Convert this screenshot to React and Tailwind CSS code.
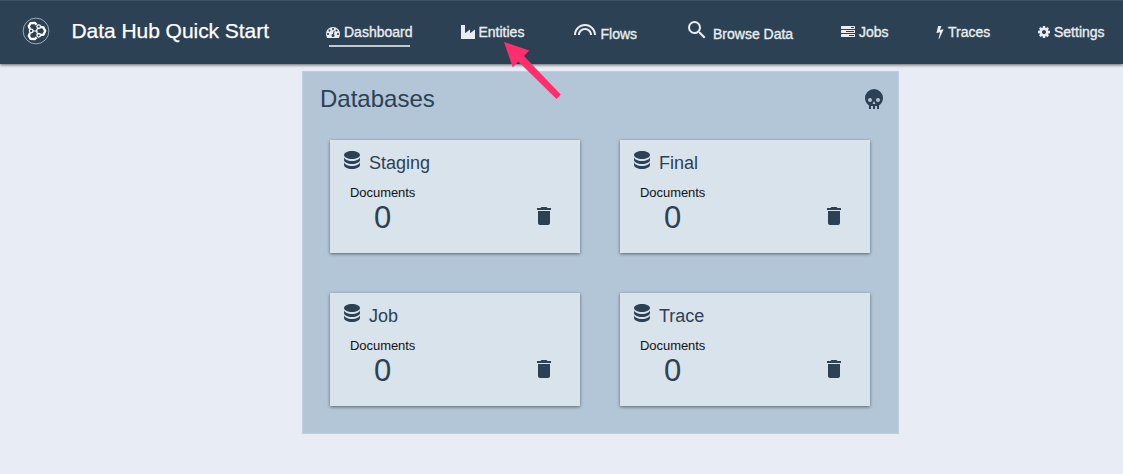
import React from "react";
import { MdLooks, MdSearch, MdDelete } from "react-icons/md";

const TACHOMETER =
  "M384 1152q0-53-37.5-90.5t-90.5-37.5-90.5 37.5-37.5 90.5 37.5 90.5 90.5 37.5 90.5-37.5 37.5-90.5zm192-448q0-53-37.5-90.5t-90.5-37.5-90.5 37.5-37.5 90.5 37.5 90.5 90.5 37.5 90.5-37.5 37.5-90.5zm428 481l101-382q6-26-7.5-48.5t-38.5-29.5-48 6.5-30 39.5l-101 382q-60 5-107 43.5t-63 98.5q-20 77 20 146t117 89 146-20 89-117q16-60-6-117t-72-91zm660-33q0-53-37.5-90.5t-90.5-37.5-90.5 37.5-37.5 90.5 37.5 90.5 90.5 37.5 90.5-37.5 37.5-90.5zm-640-640q0-53-37.5-90.5t-90.5-37.5-90.5 37.5-37.5 90.5 37.5 90.5 90.5 37.5 90.5-37.5 37.5-90.5zm448 192q0-53-37.5-90.5t-90.5-37.5-90.5 37.5-37.5 90.5 37.5 90.5 90.5 37.5 90.5-37.5 37.5-90.5zm320 448q0 261-141 483-19 29-54 29h-1402q-35 0-54-29-141-221-141-483 0-182 71-348t191-286 286-191 348-71 348 71 286 191 191 286 71 348z";
const TASKS =
  "M1024 1408h640v-128h-640v128zm-384-512h1024v-128h-1024v128zm640-512h384v-128h-384v128zm512 832v256q0 26-19 45t-45 19h-1664q-26 0-45-19t-19-45v-256q0-26 19-45t45-19h1664q26 0 45 19t19 45zm0-512v256q0 26-19 45t-45 19h-1664q-26 0-45-19t-19-45v-256q0-26 19-45t45-19h1664q26 0 45 19t19 45zm0-512v256q0 26-19 45t-45 19h-1664q-26 0-45-19t-19-45v-256q0-26 19-45t45-19h1664q26 0 45 19t19 45z";
const BOLT =
  "M1333 566q18 20 7 44l-540 1157q-13 25-42 25-4 0-14-2-17-5-25.5-19t-4.5-30l197-808-406 101q-4 1-12 1-18 0-31-11-18-15-13-39l201-825q4-14 16-23t28-9h328q19 0 32 12.5t13 29.5q0 8-5 18l-171 463 396-98q8-2 12-2 19 0 34 15z";
const COG =
  "M1152 896q0-106-75-181t-181-75-181 75-75 181 75 181 181 75 181-75 75-181zm512-109v222q0 12-8 23t-20 13l-185 28q-19 54-39 91 35 50 107 138 10 12 10 25t-9 23q-27 37-99 108t-94 71q-12 0-26-9l-138-108q-44 23-91 38-16 136-29 186-7 28-36 28h-222q-14 0-24.5-8.5t-11.5-21.5l-28-184q-49-16-90-37l-141 107q-10 9-25 9-14 0-25-11-126-114-165-168-7-10-7-23 0-12 8-23 15-21 51-66.5t54-70.5q-27-50-41-99l-183-27q-13-2-21-12.5t-8-23.5v-222q0-12 8-23t19-13l186-28q14-46 39-92-40-57-107-138-10-12-10-24 0-10 9-23 26-36 98.5-107.5t94.5-71.5q13 0 26 10l138 107q44-23 91-38 16-136 29-186 7-28 36-28h222q14 0 24.5 8.5t11.5 21.5l28 184q49 16 90 37l142-107q9-9 24-9 13 0 25 10 129 119 165 170 7 8 7 22 0 12-8 23-15 21-51 66.5t-54 70.5q26 50 41 98l183 28q13 2 21 12.5t8 23.5z";
const SKULL =
  "M12,2A9,9 0 0,0 3,11C3,14.03 4.53,16.82 7,18.47V22H9V19H11V22H13V19H15V22H17V18.46C19.47,16.81 21,14 21,11A9,9 0 0,0 12,2M8,11A2,2 0 0,1 10,13A2,2 0 0,1 8,15A2,2 0 0,1 6,13A2,2 0 0,1 8,11M16,11A2,2 0 0,1 18,13A2,2 0 0,1 16,15A2,2 0 0,1 14,13A2,2 0 0,1 16,11M12,14L13.5,17H10.5L12,14Z";
const DATABASE =
  "M12,3C7.58,3 4,4.79 4,7C4,9.21 7.58,11 12,11C16.42,11 20,9.21 20,7C20,4.79 16.42,3 12,3M4,9V12C4,14.21 7.58,16 12,16C16.42,16 20,14.21 20,12V9C20,11.21 16.42,13 12,13C7.58,13 4,11.21 4,9M4,14V17C4,19.21 7.58,21 12,21C16.42,21 20,19.21 20,17V14C20,16.21 16.42,18 12,18C7.58,18 4,16.21 4,14Z";

function Glyph({ d, box = 24, className }) {
  return (
    <svg viewBox={`0 0 ${box} ${box}`} className={`block shrink-0 ${className}`} fill="currentColor">
      <path d={d} />
    </svg>
  );
}

function Logo() {
  return (
    <svg viewBox="0 0 28 28" className="block h-7 w-7 shrink-0" fill="none" stroke="#fff">
      <circle cx="14" cy="14" r="12.9" strokeWidth="0.8" stroke="#b9c5ce" />
      <path d="M14.6 7.6L12.8 6L8.6 6.2L6.8 9.2L8 12" strokeWidth="2.3" />
      <path d="M8 16L6.8 18.8L8.6 21.8L12.8 22L14.6 20.4" strokeWidth="2.3" />
      <path d="M18.6 10L21.4 10.4L23.2 14L21.4 17.6L18.6 18" strokeWidth="2.3" />
      <path d="M10.8 14H16M13.8 14L16.4 10.6M13.8 14L16.4 17.4" strokeWidth="1.1" />
      <circle cx="9.2" cy="14" r="1.8" strokeWidth="1.3" />
      <circle cx="16.7" cy="9.7" r="1.8" strokeWidth="1.3" />
      <circle cx="16.7" cy="18.3" r="1.8" strokeWidth="1.3" />
    </svg>
  );
}

function NavItem({ icon, label, className = "" }) {
  return (
    <a className={`flex shrink-0 items-center text-sm leading-5 whitespace-nowrap text-[#e9edf0] [-webkit-text-stroke:0.35px_#e9edf0] ${className}`}>
      {icon}
      <span>{label}</span>
    </a>
  );
}

function Header() {
  return (
    <header className="relative z-10 flex h-[63.5px] items-start border-t border-[#3b5364] bg-[#2c4154] shadow-[0_1px_3px_rgba(0,0,0,0.6)]">
      <div className="flex w-[326px] shrink-0 items-center pt-4 pl-[22px]">
        <Logo />
        <h1 className="ml-[21.5px] text-[21px] leading-7 tracking-[-0.05px] whitespace-nowrap text-white [-webkit-text-stroke:0.25px_#fff]">
          Data Hub Quick Start
        </h1>
      </div>
      <nav className="flex items-start pt-[21px]">
        <div className="w-[134px] shrink-0">
          <NavItem label="Dashboard" icon={<Glyph d={TACHOMETER} box={1792} className="mr-1 h-3.5 w-3.5" />} />
          <div className="mt-[3px] ml-[3px] h-0.5 w-[81px] bg-[#c3cace]" />
        </div>
        <NavItem
          label="Entities"
          className="w-[113px]"
          icon={
            <svg viewBox="0 0 14 14" className="mr-[3.5px] ml-px block h-3.5 w-3.5 shrink-0" fill="currentColor">
              <path d="M0 0H4V8.2L9 4.6V8.2L14 4.6V14H0Z" />
            </svg>
          }
        />
        <NavItem label="Flows" className="mt-[1.5px] w-[112px]" icon={<MdLooks className="-mt-2 mr-[3.5px] block h-6 w-6 shrink-0" />} />
        <NavItem label="Browse Data" className="mt-[1.5px] w-[156px]" icon={<MdSearch className="-mt-2 mr-1 block h-6 w-6 shrink-0" />} />
        <NavItem label="Jobs" className="w-[92px]" icon={<Glyph d={TASKS} box={1792} className="mr-1 h-3.5 w-3.5" />} />
        <NavItem label="Traces" className="w-[104px]" icon={<Glyph d={BOLT} box={1792} className="mr-px h-3.5 w-3.5" />} />
        <NavItem label="Settings" icon={<Glyph d={COG} box={1792} className="mr-[3px] h-3.5 w-3.5" />} />
      </nav>
    </header>
  );
}

function DatabaseCard({ name }) {
  return (
    <section className="h-[113px] w-[250px] bg-[#d9e3ec] shadow-[0_1px_3px_rgba(0,0,0,0.5)]">
      <div className="flex items-start pt-2 pl-2.5">
        <Glyph d={DATABASE} className="h-6 w-6" />
        <h3 className="mt-[3px] ml-[5px] text-lg leading-6">{name}</h3>
      </div>
      <div className="flex items-start justify-between pr-6 pl-5">
        <div className="mt-2 flex flex-col items-center">
          <span className="text-[13px] leading-5 tracking-[-0.05px] text-[#111]">Documents</span>
          <span className="-mt-px text-[31px] leading-[31px]">0</span>
        </div>
        <MdDelete className="mt-[29px] block h-6 w-6" />
      </div>
    </section>
  );
}

function PointerArrow() {
  return (
    <svg viewBox="0 0 60 60" className="pointer-events-none absolute top-10 left-[502px] z-20 h-[60px] w-[60px]" fill="#ff2f6e">
      <path d="M2 2L27.3 10.5L21.9 16L58.8 54.5L54.5 59L16.3 21.6L10.8 27.4Z" />
    </svg>
  );
}

export default function App() {
  return (
    <div className="relative h-[474px] w-[1123px] overflow-hidden bg-[#e8edf5] font-['Liberation_Sans',Arial,sans-serif] text-[#2c4154]">
      <Header />
      <main className="mt-[7.5px] ml-[302px] h-[363px] w-[597px] border border-[#bdcedd] bg-[#b2c6d7]">
        <div className="flex h-[67.6px] items-start justify-between pt-[11px] pr-3 pl-[17px]">
          <h2 className="text-2xl leading-8">Databases</h2>
          <Glyph d={SKULL} className="mt-1 h-6 w-6" />
        </div>
        <div className="grid grid-cols-[250px_250px] gap-x-10 gap-y-10 pl-[27px]">
          <DatabaseCard name="Staging" />
          <DatabaseCard name="Final" />
          <DatabaseCard name="Job" />
          <DatabaseCard name="Trace" />
        </div>
      </main>
      <PointerArrow />
    </div>
  );
}
